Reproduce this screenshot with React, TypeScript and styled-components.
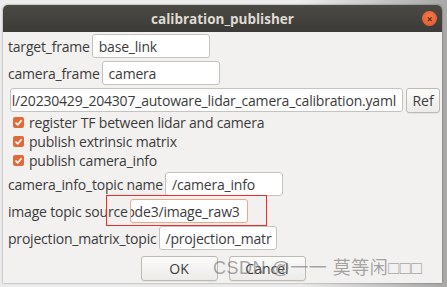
import React from 'react';
import styled, { createGlobalStyle } from 'styled-components';

const GlobalStyle = createGlobalStyle`
	html, body {
		margin: 0;
		padding: 0;
		width: 447px;
		height: 287px;
		overflow: hidden;
		background: #d4d4d4;
		font-family: 'Open Sans', 'DejaVu Sans', sans-serif;
	}
`;

const Desktop = styled.div`
	width: 447px;
	height: 287px;
	box-sizing: border-box;
	padding: 5px 5px 4px 3px;
	background: linear-gradient(to right, #ececec 0, #ececec 300px, #a9a9a9 442px);
	position: relative;
`;

const Dialog = styled.div`
	width: 439px;
	height: 278px;
	display: flex;
	flex-direction: column;
	background: #f2f1f0;
	box-shadow: 0 0 2px rgba(0, 0, 0, 0.5);
	border-radius: 5px 5px 0 0;
	overflow: hidden;
`;

const TitleBar = styled.div`
	height: 27px;
	flex: none;
	display: flex;
	align-items: center;
	justify-content: center;
	position: relative;
	background: linear-gradient(to bottom, #4a4944, #3c3b37);
	color: #dfdbd2;
	font-weight: bold;
	font-size: 13.5px;
`;

const CloseButton = styled.div`
	position: absolute;
	right: 5px;
	top: 6px;
	width: 15px;
	height: 15px;
	border-radius: 50%;
	background: radial-gradient(circle at 50% 40%, #f47a4a, #e0532a);
	display: flex;
	align-items: center;
	justify-content: center;
	color: #5a2a16;
	font-size: 10px;
	line-height: 1;
	font-weight: bold;
`;

const Body = styled.div`
	display: flex;
	flex-direction: column;
	padding: 2px 2px 0 5px;
	gap: 3px;
	color: #3c3c3c;
	font-size: 14px;
`;

const Row = styled.div`
	display: flex;
	align-items: center;
	height: 24px;
	gap: 2px;
`;

const PathRow = styled(Row)`
	padding-left: 2px;
	gap: 3px;
`;

const Label = styled.span`
	white-space: nowrap;
	letter-spacing: -0.2px;
`;

const Input = styled.div<{ $width: number; $focus?: boolean; $alignEnd?: boolean }>`
	width: ${(p) => p.$width}px;
	height: 24px;
	box-sizing: border-box;
	background: #fff;
	border: 1px solid ${(p) => (p.$focus ? '#e9a98a' : '#c6c3be')};
	border-radius: 3px;
	padding: 0 6px;
	display: flex;
	align-items: center;
	justify-content: ${(p) => (p.$alignEnd ? 'flex-end' : 'flex-start')};
	overflow: hidden;
	white-space: nowrap;
	color: #3c3c3c;
	letter-spacing: -0.2px;
`;

const Caret = styled.span`
	display: inline-block;
	width: 1px;
	height: 15px;
	background: #3c3c3c;
	margin-left: 1px;
`;

const Button = styled.div<{ $width: number }>`
	width: ${(p) => p.$width}px;
	height: 25px;
	box-sizing: border-box;
	border: 1px solid #bdb9b3;
	border-radius: 3px;
	background: linear-gradient(to bottom, #fbfbfa, #ecebe9);
	display: flex;
	align-items: center;
	justify-content: center;
	color: #3c3c3c;
	font-size: 14px;
	box-shadow: 0 1px 0 rgba(0, 0, 0, 0.05);
`;

const CheckList = styled.div`
	display: flex;
	flex-direction: column;
	margin: -2px 0 -1px;
	padding-left: 5px;
`;

const CheckRow = styled.div`
	display: flex;
	align-items: center;
	height: 19px;
	gap: 5px;
`;

const Box = styled.span`
	width: 11px;
	height: 11px;
	border-radius: 2px;
	background: #e06b3a;
	display: flex;
	align-items: center;
	justify-content: center;
`;

const ButtonRow = styled.div`
	display: flex;
	justify-content: center;
	gap: 11px;
	padding-top: 3px;
	padding-right: 2px;
`;

const Highlight = styled.div`
	position: absolute;
	left: 106px;
	top: 195px;
	width: 161px;
	height: 31px;
	box-sizing: border-box;
	border: 1px solid #ee2b2b;
`;

const Watermark = styled.div`
	position: absolute;
	left: 213px;
	top: 253px;
	font-size: 18px;
	color: rgba(110, 110, 110, 0.6);
	white-space: nowrap;
	font-family: 'Liberation Sans', 'Noto Sans CJK SC', sans-serif;
	letter-spacing: 0.5px;
`;

function Check() {
	return (
		<Box>
			<svg width="9" height="9" viewBox="0 0 9 9">
				<path d="M1.5 4.6 L3.7 6.8 L7.6 2.2" stroke="#fff" strokeWidth="1.6" fill="none" />
			</svg>
		</Box>
	);
}

const checks = [
	'register TF between lidar and camera',
	'publish extrinsic matrix',
	'publish camera_info'
];

export default function App() {
	return (
		<Desktop>
			<GlobalStyle />
			<Dialog>
				<TitleBar>
					calibration_publisher
					<CloseButton>×</CloseButton>
				</TitleBar>
				<Body>
					<Row>
						<Label>target_frame</Label>
						<Input $width={118}>base_link</Input>
					</Row>
					<Row>
						<Label>camera_frame</Label>
						<Input $width={118}>camera</Input>
					</Row>
					<PathRow>
						<Input $width={393} $alignEnd>
							l/20230429_204307_autoware_lidar_camera_calibration.yaml
						</Input>
						<Button $width={34}>Ref</Button>
					</PathRow>
					<CheckList>
						{checks.map((c) => (
							<CheckRow key={c}>
								<Check />
								<Label>{c}</Label>
							</CheckRow>
						))}
					</CheckList>
					<Row>
						<Label>camera_info_topic name</Label>
						<Input $width={118}>/camera_info</Input>
					</Row>
					<Row>
						<Label>image topic source</Label>
						<Input $width={118} $focus $alignEnd>
							ode3/image_raw3
							<Caret />
						</Input>
					</Row>
					<Row>
						<Label>projection_matrix_topic</Label>
						<Input $width={118}>/projection_matr</Input>
					</Row>
					<ButtonRow>
						<Button $width={77}>OK</Button>
						<Button $width={77}>Cancel</Button>
					</ButtonRow>
				</Body>
			</Dialog>
			<Highlight />
			<Watermark>CSDN @一一 莫等闲□□□</Watermark>
		</Desktop>
	);
}
